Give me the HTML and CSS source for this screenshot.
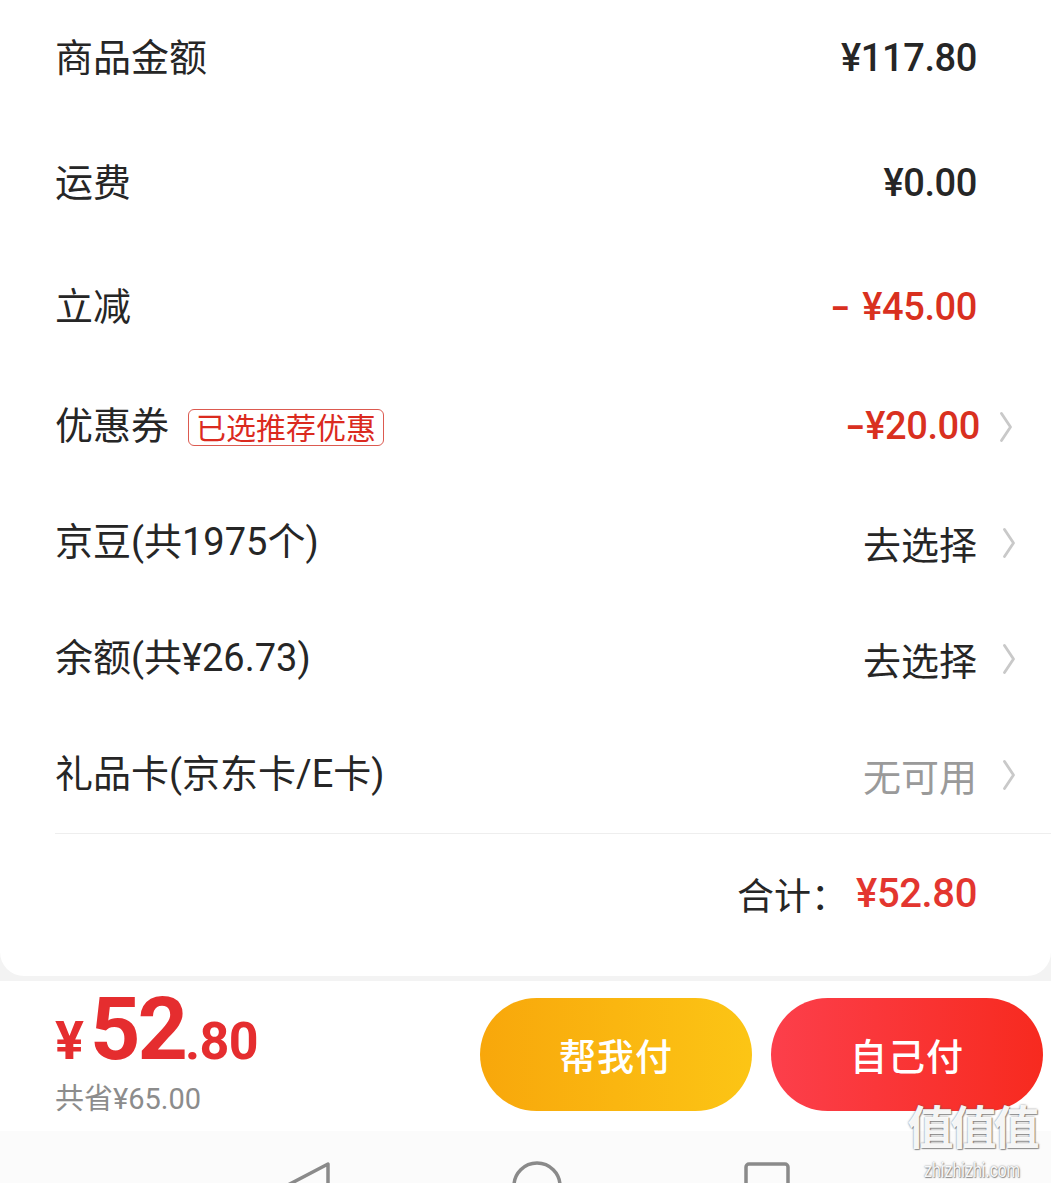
FILE: index.html
```html
<!DOCTYPE html>
<html lang="zh-CN">
<head>
<meta charset="utf-8">
<title>订单结算</title>
<link rel="stylesheet" href="styles.css">
</head>
<body>
<div class="screen">
  <section class="card">
    <div class="list">
      <div class="row r125">
        <span class="label">商品金额</span>
        <span class="value num">¥117.80</span>
      </div>
      <div class="row r125">
        <span class="label">运费</span>
        <span class="value num">¥0.00</span>
      </div>
      <div class="row r124">
        <span class="label">立减</span>
        <span class="value num red"><span class="minus spaced">-</span>¥45.00</span>
      </div>
      <div class="row r116">
        <span class="label">优惠券<span class="tag">已选推荐优惠</span></span>
        <span class="value num red shift"><span class="minus">-</span>¥20.00</span>
        <svg class="chev" viewBox="0 0 12 30" aria-hidden="true"><polyline points="1.5,1.5 10.5,15 1.5,28.5"/></svg>
      </div>
      <div class="row r116">
        <span class="label">京豆(共1975个)</span>
        <span class="value">去选择</span>
        <svg class="chev" viewBox="0 0 12 30" aria-hidden="true"><polyline points="1.5,1.5 10.5,15 1.5,28.5"/></svg>
      </div>
      <div class="row r116">
        <span class="label">余额(共¥26.73)</span>
        <span class="value">去选择</span>
        <svg class="chev" viewBox="0 0 12 30" aria-hidden="true"><polyline points="1.5,1.5 10.5,15 1.5,28.5"/></svg>
      </div>
      <div class="row r116">
        <span class="label">礼品卡(京东卡/E卡)</span>
        <span class="value muted">无可用</span>
        <svg class="chev" viewBox="0 0 12 30" aria-hidden="true"><polyline points="1.5,1.5 10.5,15 1.5,28.5"/></svg>
      </div>
    </div>
    <div class="total">
      <span class="total-label">合计：</span><span class="num total-num">¥52.80</span>
    </div>
  </section>

  <footer class="paybar">
    <div class="price">
      <div class="price-line"><span class="yen">¥</span><span class="big">52</span><span class="cents">.80</span></div>
      <div class="saved">共省¥65.00</div>
    </div>
    <div class="buttons">
      <button class="btn btn-help">帮我付</button>
      <button class="btn btn-self">自己付</button>
    </div>
  </footer>

  <nav class="sysnav">
    <svg class="navicon" viewBox="0 0 50 50" aria-hidden="true"><polygon points="46,3 46,47 4,25"/></svg>
    <svg class="navicon" viewBox="0 0 50 50" aria-hidden="true"><circle cx="25" cy="25" r="23"/></svg>
    <svg class="navicon" viewBox="0 0 50 50" aria-hidden="true"><rect x="4" y="3" width="42" height="42" rx="3"/></svg>
  </nav>

  <div class="watermark">
    <div class="wm-big">值值值</div>
    <div class="wm-small">zhizhizhi.com</div>
  </div>
</div>
</body>
</html>
```

FILE: styles.css
```css
* { box-sizing: border-box; }

html, body {
  margin: 0;
  padding: 0;
  background: #f3f3f3;
}

body {
  font-family: Roboto, "Noto Sans CJK SC", sans-serif;
  color: #262626;
}

.screen {
  position: relative;
  width: 1051px;
  height: 1183px;
  overflow: hidden;
  background: #f3f3f3;
}

/* ---------- card ---------- */
.card {
  background: #ffffff;
  border-radius: 0 0 24px 24px;
  padding-bottom: 23px;
}

.list {
  margin-top: -4px;
}

.row {
  display: flex;
  align-items: center;
  padding: 0 74px 0 55px;
}

.r125 { height: 125px; }
.r124 { height: 123px; }
.r116 { height: 116px; }

.label {
  flex: 1;
  display: flex;
  align-items: center;
  font-size: 38px;
  line-height: 1.2;
  color: #262626;
}

.tag {
  margin-left: 19px;
  height: 37px;
  padding: 0 7px;
  border: 1.5px solid #dc5a50;
  border-radius: 6px;
  font-size: 30px;
  line-height: 33px;
  color: #db2a1f;
  font-family: "Noto Sans CJK SC", sans-serif;
}

.value {
  font-size: 38px;
  line-height: 1.2;
  color: #262626;
  font-family: "Noto Sans CJK SC", sans-serif;
}

.value.num,
.num {
  font-family: Roboto, "Noto Sans CJK SC", sans-serif;
  font-weight: 500;
  font-size: 38px;
  letter-spacing: -0.4px;
}

.value.shift {
  margin-right: -3px;
}

.minus {
  display: inline-block;
  transform: scaleX(1.5);
  margin-right: 4px;
  margin-left: 2px;
}

.minus.spaced {
  margin-right: 16px;
}

.value.muted { color: #9a9a9a; }

.red { color: #d9301f; }

.chev {
  width: 12px;
  height: 30px;
  margin-left: 26px;
  margin-right: -38px;
  flex: none;
}

.value.shift + .chev {
  margin-left: 23px;
  margin-right: -35px;
}

.chev polyline {
  fill: none;
  stroke: #c9c9c9;
  stroke-width: 2.8;
  stroke-linecap: round;
  stroke-linejoin: round;
}

/* ---------- total ---------- */
.total {
  margin-left: 55px;
  border-top: 1px solid #eeeeee;
  height: 120px;
  padding-right: 74px;
  display: flex;
  align-items: center;
  justify-content: flex-end;
}

.total-label {
  font-family: "Noto Sans CJK SC", sans-serif;
  font-size: 37px;
  color: #262626;
}

.total-num {
  margin-left: 8px;
  font-size: 40px;
  color: #e3362f;
}

/* ---------- pay bar ---------- */
.paybar {
  margin-top: 5px;
  height: 150px;
  background: #ffffff;
  display: flex;
  align-items: flex-start;
  justify-content: space-between;
  padding: 8px 8px 0 55px;
}

.price {
  display: flex;
  flex-direction: column;
}

.price-line {
  height: 80px;
  line-height: 80px;
  color: #e52d2f;
  font-family: Roboto, sans-serif;
  font-weight: 700;
  white-space: nowrap;
}

.yen {
  font-size: 54px;
  margin-right: 6px;
}

.big {
  font-size: 88px;
  letter-spacing: -3px;
}

.cents {
  font-size: 52px;
  letter-spacing: -0.5px;
}

.saved {
  margin-top: 12px;
  height: 36px;
  line-height: 36px;
  font-size: 29px;
  color: #8c8c8c;
  font-family: Roboto, "Noto Sans CJK SC", sans-serif;
}

.buttons {
  display: flex;
  gap: 19px;
  padding-top: 9px;
}

.btn {
  width: 272px;
  height: 113px;
  border: none;
  border-radius: 57px;
  color: #ffffff;
  font-family: "Noto Sans CJK SC", sans-serif;
  font-size: 37px;
  font-weight: 500;
  letter-spacing: 1px;
  padding: 0;
}

.btn-help {
  background: linear-gradient(90deg, #f8a70b 0%, #fcc515 100%);
}

.btn-self {
  background: linear-gradient(90deg, #fc3f4b 0%, #f72a1f 100%);
}

/* ---------- system nav ---------- */
.sysnav {
  height: 53px;
  background: #fbfbfb;
  display: flex;
  align-items: flex-start;
  gap: 180px;
  padding: 30px 0 0 282px;
}

.navicon {
  width: 50px;
  height: 50px;
  flex: none;
}

.navicon polygon,
.navicon circle,
.navicon rect {
  fill: none;
  stroke: #8a8a8a;
  stroke-width: 3.5;
  stroke-linejoin: round;
}

/* ---------- watermark ---------- */
.watermark {
  position: absolute;
  left: 898px;
  top: 1090px;
  width: 148px;
  text-align: center;
  color: rgba(255, 255, 255, 0.95);
  text-shadow: 0 0 2px rgba(90, 90, 90, 0.8), 1px 1px 1px rgba(90, 90, 90, 0.6);
  pointer-events: none;
}

.wm-big {
  font-family: "Noto Sans CJK SC", sans-serif;
  font-size: 46px;
  font-weight: 700;
  height: 68px;
  line-height: 68px;
  letter-spacing: -3px;
}

.wm-small {
  font-family: "Liberation Sans", sans-serif;
  font-size: 20px;
  height: 24px;
  line-height: 24px;
  transform: scaleX(0.8);
  transform-origin: center;
}
```
